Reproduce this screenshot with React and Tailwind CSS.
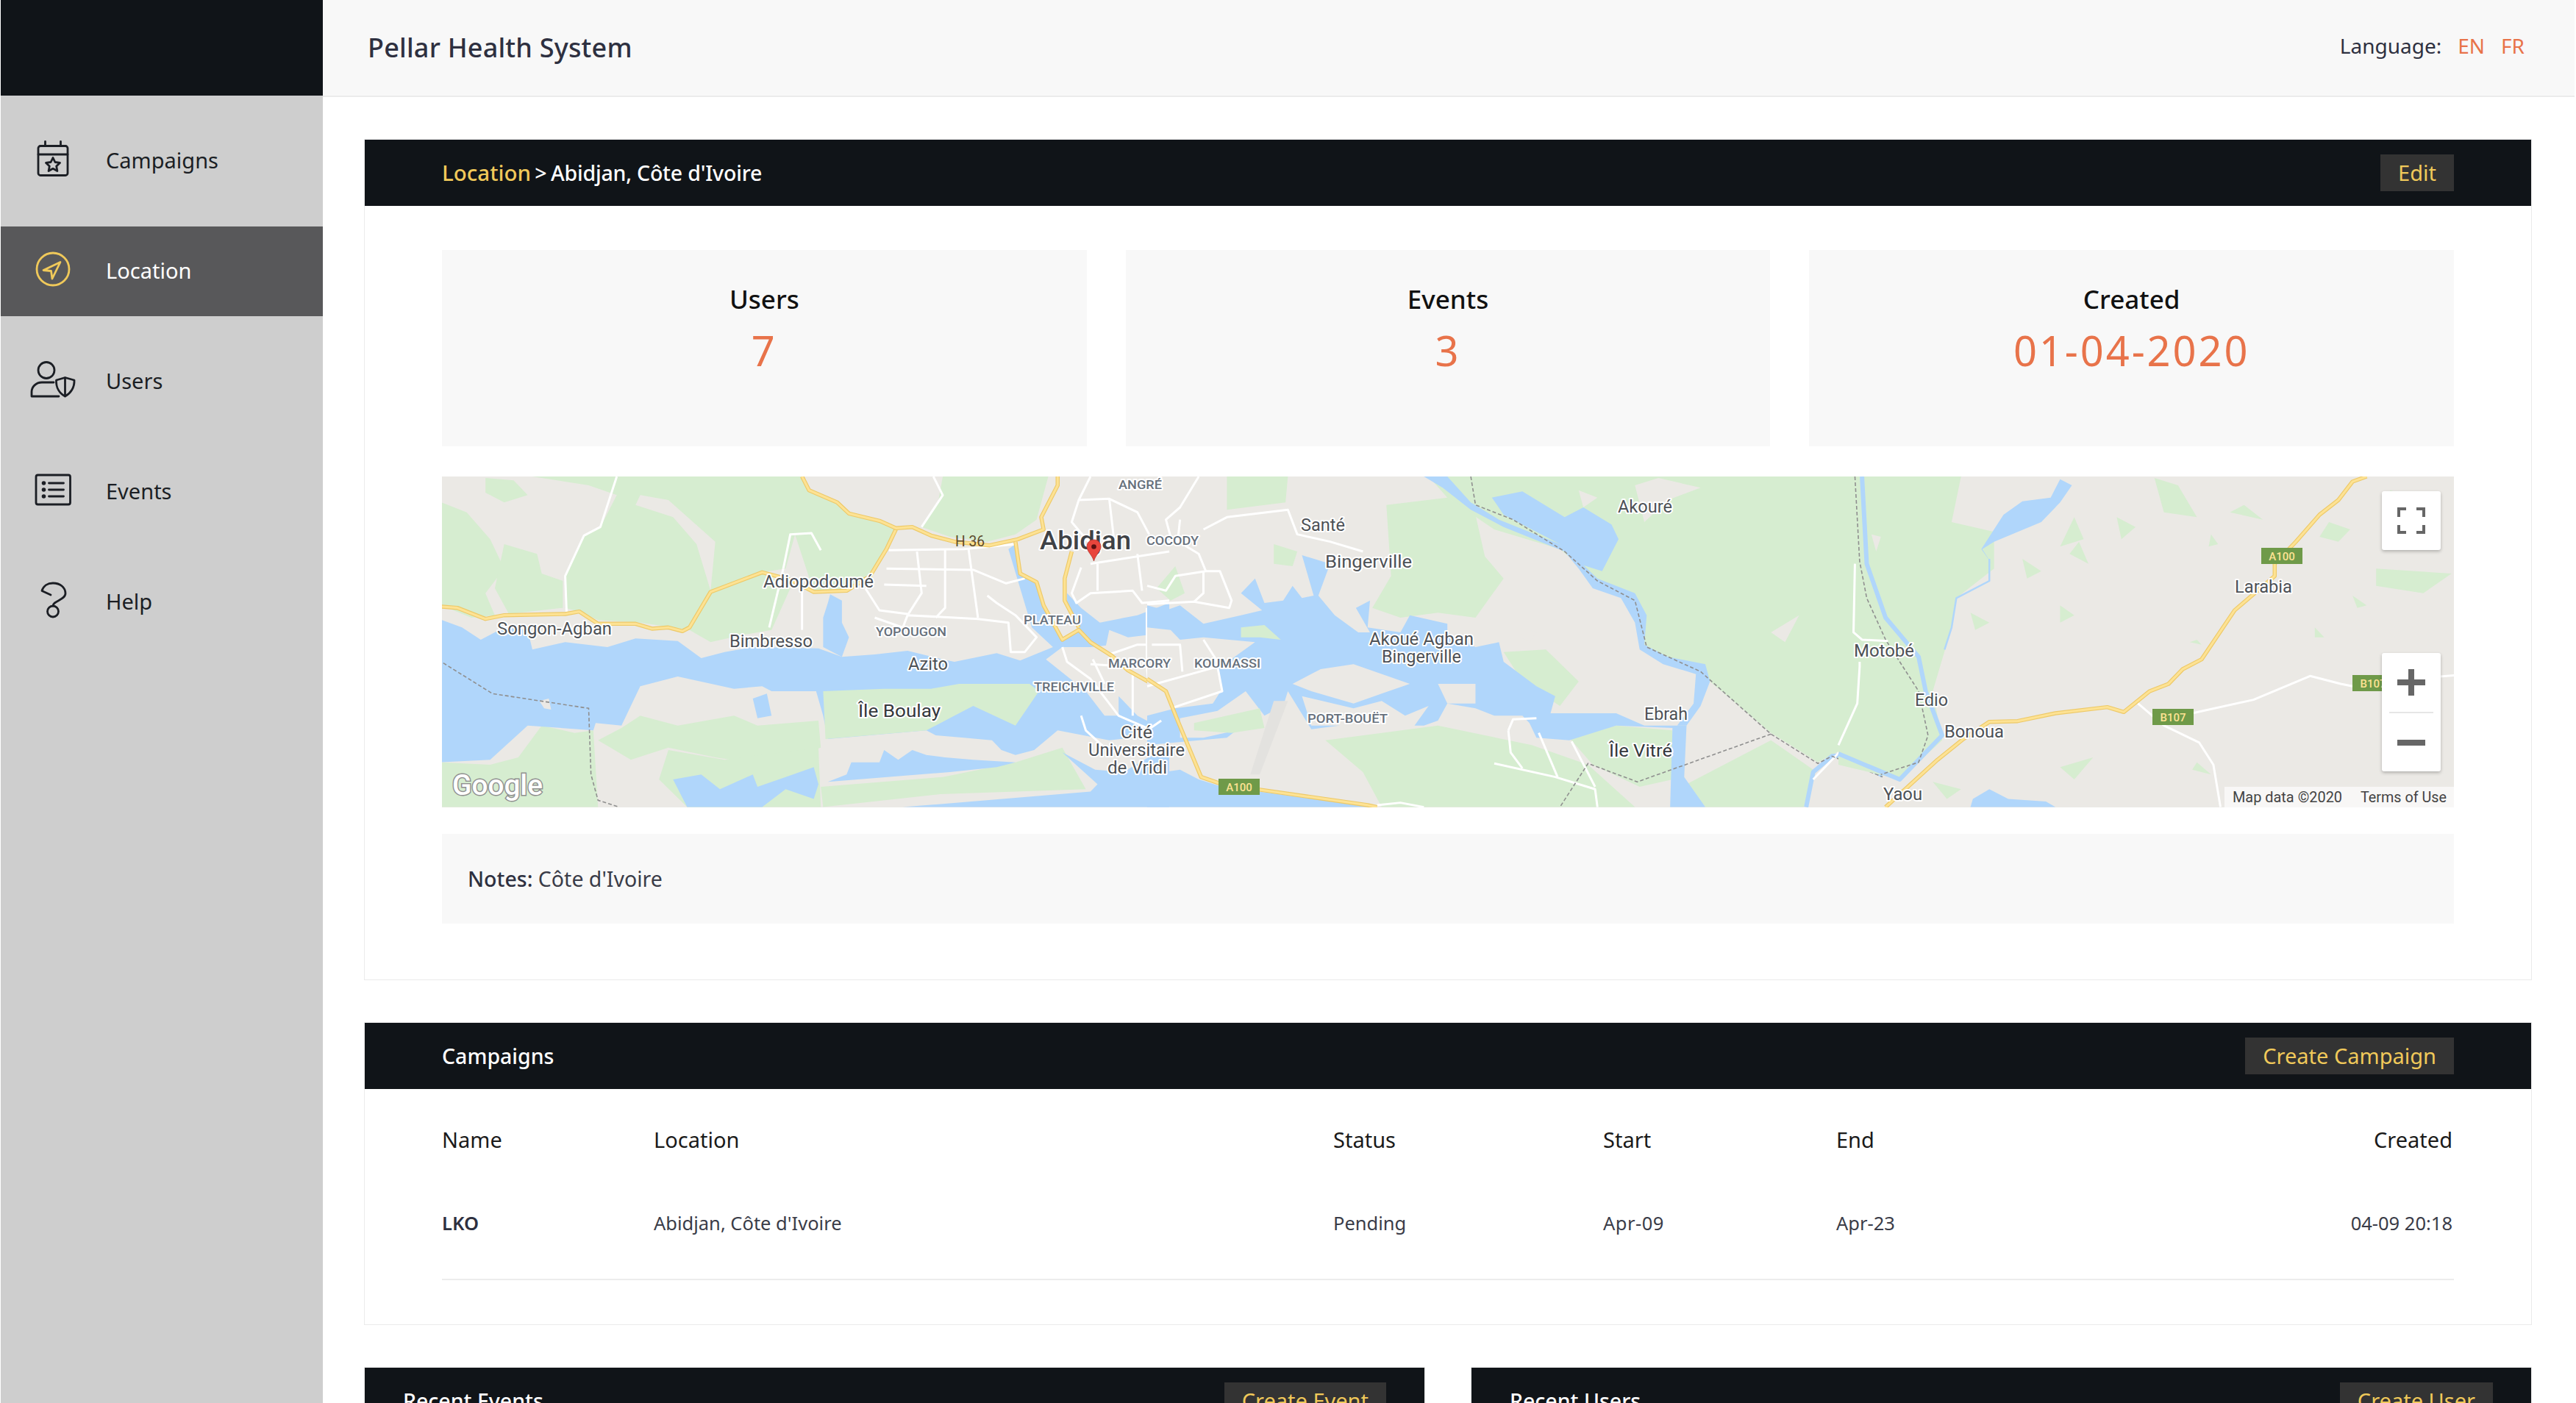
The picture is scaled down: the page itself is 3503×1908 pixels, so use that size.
import React from "react";

const INK = "#1b1e24";
const YEL = "#f0c95a";

function IconCampaigns() {
  return (
    <svg width="62" height="56" viewBox="40 188 62 56" fill="none" stroke={INK} strokeWidth="2.8" strokeLinecap="round" strokeLinejoin="round" className="-mt-[6px]">
      <rect x="51" y="198.5" width="40" height="40" rx="3" />
      <path d="M51 210H91M60.5 192.5V198.5M81.5 192.5V198.5" />
      <path d="M71 214.5l2.9 6 6.6.9-4.8 4.6 1.2 6.5-5.9-3.2-5.9 3.2 1.2-6.5-4.8-4.6 6.6-.9z" />
    </svg>
  );
}
function IconLocation() {
  return (
    <svg width="62" height="56" viewBox="40 338 62 56" fill="none" stroke={YEL} strokeWidth="2.8" strokeLinecap="round" strokeLinejoin="round" className="-mt-[6px]">
      <circle cx="71" cy="366" r="22" />
      <path d="M81 356.5L58 367.5L68.5 368.5L70 379Z" />
    </svg>
  );
}
function IconUsers() {
  return (
    <svg width="62" height="56" viewBox="40 488 62 56" fill="none" stroke={INK} strokeWidth="2.8" strokeLinecap="round" strokeLinejoin="round" className="-mt-[6px]">
      <circle cx="62" cy="503.5" r="11" />
      <path d="M72 520H56C48 520 42 526 42 533V539H79" />
      <path d="M87.5 513.5L100 517C100.500 527 95 535 87.500 539C80 535 75 527 75.500 517Z" />
      <path d="M87.500 514V538" />
    </svg>
  );
}
function IconEvents() {
  return (
    <svg width="62" height="56" viewBox="40 638 62 56" fill="none" stroke={INK} strokeWidth="2.8" strokeLinecap="round" strokeLinejoin="round" className="-mt-[6px]">
      <rect x="48" y="646" width="46.500" height="40" rx="2.500" />
      <path d="M65.500 657H85.500M65.500 666H85.500M65.500 675H85.500" />
      <circle cx="58.500" cy="657" r="1.400" fill={INK} />
      <circle cx="58.500" cy="666" r="1.400" fill={INK} />
      <circle cx="58.500" cy="675" r="1.400" fill={INK} />
    </svg>
  );
}
function IconHelp() {
  return (
    <svg width="62" height="56" viewBox="40 788 62 56" fill="none" stroke={INK} strokeWidth="2.8" strokeLinecap="round" strokeLinejoin="round" className="-mt-[6px]">
      <path d="M68 809L56 803.500C58 796.500 64 793 71 793C81 793 88 799 88 807C88 816 71 817 71 824" />
      <circle cx="71" cy="831.500" r="7.500" />
    </svg>
  );
}

const NAV = [
  ["Campaigns", IconCampaigns],
  ["Location", IconLocation, true],
  ["Users", IconUsers],
  ["Events", IconEvents],
  ["Help", IconHelp],
];

function Sidebar() {
  return (
    <aside className="flex w-[438px] shrink-0 flex-col bg-[#cecece]">
      <div className="h-[130px] bg-[#101418]" />
      <nav className="flex flex-col gap-[28px] pt-[28px]">
        {NAV.map(([label, Icon, active]) => (
          <div key={label} className={`flex h-[122px] items-center ${active ? "bg-[#58585a] text-white" : "text-[#1b1e24]"}`}>
            <div className="flex w-[143px] justify-center pr-[1px]"><Icon /></div>
            <span className="-mt-[2px] text-[29px]">{label}</span>
          </div>
        ))}
      </nav>
    </aside>
  );
}

function CardHeader({ children, action, px = "px-[105px]" }) {
  return (
    <div className={`flex h-[90px] items-center justify-between bg-[#101418] ${px}`}>
      <div className="text-[28.5px] font-medium text-white">{children}</div>
      {action && (
        <div className="flex h-[50px] items-center bg-[#333333] px-[24px] text-[29px] text-[#f0c95a]">{action}</div>
      )}
    </div>
  );
}

function Stat({ label, value }) {
  return (
    <div className="flex h-[267px] flex-col items-center bg-[#f8f8f8] pt-[42px]">
      <div className="h-[50px] text-[35px] font-medium leading-[50px] text-[#111]">{label}</div>
      <div className="mt-[8px] text-[56px] leading-[72px] tracking-[2.9px] text-[#e8734a]">{value}</div>
    </div>
  );
}

const Z5 = "translate(-11,-8) scale(0.6378,0.3333)";
const Z6 = "translate(959,-8) scale(0.6378,0.3333)";
const Z7 = "translate(1899,-8) scale(0.6414,0.3333)";

const GREEN = "#d6edd0";
const WATER = "#b0d6fb";
const LAND = "#ebe9e5";

function P({ pts, fill }) {
  return <polygon points={pts} fill={fill} />;
}
function Wh({ pts, w = 3 }) {
  return <polyline points={pts} fill="none" stroke="#ffffff" strokeWidth={w} strokeLinejoin="round" vectorEffect="non-scaling-stroke" />;
}
function Yw({ pts }) {
  return (
    <g fill="none" strokeLinejoin="round">
      <polyline points={pts} stroke="#edc968" strokeWidth="5.5" vectorEffect="non-scaling-stroke" />
      <polyline points={pts} stroke="#fde293" strokeWidth="3.2" vectorEffect="non-scaling-stroke" />
    </g>
  );
}
function Dash({ pts }) {
  return <polyline points={pts} fill="none" stroke="#8f8f8f" strokeWidth="1.6" strokeDasharray="5 3" vectorEffect="non-scaling-stroke" />;
}
function River({ pts, w = 6 }) {
  return <polyline points={pts} fill="none" stroke={WATER} strokeWidth={w} strokeLinejoin="round" vectorEffect="non-scaling-stroke" />;
}

function L({ x, y, w, t, s = 24, c = "#4d5156", b }) {
  return (
    <text x={x} y={y} fontSize={s} fill={c} fontWeight={b ? 500 : 400} textLength={w} lengthAdjust="spacingAndGlyphs" stroke="#ffffff" strokeWidth="4" strokeLinejoin="round" paintOrder="stroke">
      {t}
    </text>
  );
}
function Badge({ x, y, w = 56, t }) {
  return (
    <g>
      <rect x={x} y={y} width={w} height="22" fill="#6f9a49" />
      <text x={x + w / 2} y={y + 16.500} fontSize="15" fill="#fde293" textAnchor="middle" fontWeight="500">{t}</text>
    </g>
  );
}

function MapArt() {
  return (
    <svg viewBox="0 0 2738 450" width="2738" height="450" className="block font-['Roboto',sans-serif]">
      <rect width="2738" height="450" fill={LAND} />
      <g transform={Z5}>
        <P fill={GREEN} pts="210,24 785,24 800,80 860,130 885,175 950,205 985,235 960,320 930,430 880,490 810,495 770,260 750,400 700,415 590,495 545,650 440,620 350,610 310,575 280,560 280,430 320,265 355,230 390,100 330,60" />
        <P fill={LAND} pts="440,100 500,120 600,290 590,490 560,300 510,190 430,140" />
        <P fill={GREEN} pts="1085,24 1310,24 1285,200 1240,260 1180,290 1100,270 1040,230 1075,130" />
        <P fill={GREEN} pts="17,130 70,170 120,280 150,400 110,500 130,590 80,600 17,550" />
        <P fill={GREEN} pts="150,300 220,340 230,420 275,450 275,560 160,585 130,480" />
        <P fill={GREEN} pts="110,30 170,40 200,100 150,130 110,90" />
        <P fill={GREEN} pts="590,495 700,415 760,480 720,650 660,670 590,700 545,650" />
        <P fill={GREEN} pts="17,1190 120,1200 180,1170 230,1040 300,1070 340,1060 350,1373 17,1373" />
        <P fill={GREEN} pts="400,1050 440,1000 520,1040 640,1000 690,1040 820,1020 825,1130 700,1200 600,1170 500,1130 420,1180 350,1100" />
        <P fill={GREEN} pts="500,1140 620,1180 820,1130 825,1373 540,1373 480,1260" />
        <P fill={GREEN} pts="825,1290 1085,1250 1240,1190 1340,1130 1390,1300 1080,1320 830,1373" />

        <P fill={WATER} pts="17,610 60,640 100,690 150,640 200,650 210,730 280,700 370,720 430,685 520,695 570,765 620,740 680,720 820,725 870,760 940,750 1010,735 1085,770 1110,780 1200,745 1250,775 1320,720 1275,640 1225,320 1240,300 1250,430 1290,460 1300,560 1340,690 1375,650 1350,560 1350,500 1380,560 1420,620 1500,590 1568,540 1568,660 1480,680 1440,650 1430,740 1400,720 1340,720 1305,770 1390,900 1430,1000 1490,1000 1530,1040 1568,1050 1568,1100 1490,1090 1440,1100 1330,1060 1280,1140 1240,1160 1210,1140 1190,1100 1130,1090 1070,1080 1050,1060 840,1095 830,1000 815,900 720,900 700,880 640,890 520,840 440,880 400,1040 345,1030 340,1060 200,1040 120,1180 17,1190" />
        <P fill={GREEN} pts="830,900 960,890 1060,890 1120,870 1270,870 1290,900 1240,1040 1150,960 1110,1000 1050,1060 835,1095" />
        <P fill={WATER} pts="845,505 870,530 870,620 885,680 870,760 830,720 830,600 840,540" />
        <P fill={WATER} pts="840,1270 1100,1230 1200,1210 1240,1190 1150,1180 1090,1170 1050,1160 1020,1140 990,1180 960,1140 950,1190 890,1190 880,1240" />
        <P fill={WATER} pts="510,1260 570,1240 610,1300 680,1240 690,1290 750,1250 810,1210 820,1280 810,1340 750,1300 700,1373 540,1373" />
        <P fill={WATER} pts="680,930 710,910 720,1000 690,1010" />
        <P fill={LAND} pts="225,940 245,930 250,975 235,970" />
        <P fill={WATER} pts="1000,1373 1400,1310 1415,1280 1340,1150 1410,1220 1470,1230 1568,1120 1568,1373" />
        <P fill={LAND} pts="1350,730 1400,720 1500,700 1568,700 1568,1040 1530,1030 1490,990 1440,900 1380,800" />
        <P fill={WATER} pts="1460,920 1500,1000 1540,1040 1568,1050 1568,1090 1460,1080" />

        <Wh pts="390,24 355,230 320,265 280,430 283,580" />
        <Wh pts="745,400 760,260 805,255 825,325" />
        <Wh pts="745,400 715,640" />
        <Wh pts="785,480 785,650" />
        <Wh pts="970,325 1130,320 1240,300" />
        <Wh pts="965,400 1150,405 1220,460 1260,440" />
        <Wh pts="960,465 1050,470" />
        <Wh pts="1030,330 1040,500 1010,590" />
        <Wh pts="1090,320 1090,560 1070,600" />
        <Wh pts="1140,320 1160,600" />
        <Wh pts="920,480 950,570 1010,585" />
        <Wh pts="940,600 1000,640 1010,590 1160,605 1225,620 1230,740 1260,740 1285,680 1240,590 1200,540 1180,510" />
        <Wh pts="1065,24 1085,100 1040,230" />
        <Wh pts="1375,120 1440,115 1500,170 1525,260" />
        <Wh pts="1400,24 1375,120 1360,210 1400,300" />
        <Wh pts="1440,115 1450,280" />
        <Wh pts="1400,380 1568,330" />
        <Wh pts="1380,395 1360,500 1370,540 1400,500 1490,490 1510,540 1568,530" />
        <Wh pts="1415,380 1415,490" />
        <Wh pts="1500,340 1510,490" />
        <Wh pts="1520,560 1520,800 1530,980" />
        <Wh pts="1340,720 1350,780 1400,850 1460,1000 1520,1050" />
        <Wh pts="1405,770 1430,870" />
        <Wh pts="1440,750 1500,710 1568,710" />
        <Wh pts="1400,790 1480,800" />
        <Wh pts="1490,830 1490,1000" />
        <Wh pts="1380,1000 1390,1060 1430,1130" />

        <Yw pts="17,555 50,560 110,605 150,590 280,585 310,575 350,625 430,625 465,645 500,640 530,655 545,640 590,495 700,415 760,445 810,495 880,490 930,430 965,320 985,240" />
        <Yw pts="785,24 800,80 860,130 885,175 950,205 985,235 1020,230 1060,265 1110,290 1185,305 1245,280 1300,240 1295,190 1330,60 1330,24" />
        <Yw pts="1240,290 1250,420 1285,455 1300,550 1340,690 1375,650 1400,700 1445,755 1480,815 1550,890 1568,1000" />
        <Yw pts="1360,330 1345,440 1345,530 1375,640" />
        <Dash pts="20,785 125,910 330,970 335,1240 350,1345 395,1373" />
      </g>
      <g transform={Z6}>
        <P fill={GREEN} pts="170,24 300,24 295,130 170,160" />
        <P fill={GREEN} pts="600,24 1510,24 1510,380 1505,660 1520,800 1500,1120 1430,1190 1330,1070 1200,860 1060,720 1040,510 960,450 880,320 740,240 640,110" />
        <P fill={GREEN} pts="510,140 640,110 700,180 720,350 760,440 700,600 620,580 540,600 480,560 520,430" />
        <P fill={LAND} pts="1040,60 1090,30 1180,70 1110,120 1060,210" />
        <P fill={LAND} pts="1330,660 1390,590 1360,700" />
        <P fill={LAND} pts="920,80 960,110 930,150" />
        <P fill={LAND} pts="800,640 830,660 815,700 795,680" />
        <P fill={GREEN} pts="270,300 320,330 310,390 270,380" />
        <P fill={GREEN} pts="20,480 60,390 80,500 50,530" />
        <P fill={GREEN} pts="380,1100 620,1040 720,1080 820,1120 940,1200 1040,1373 500,1373 460,1230" />
        <P fill={GREEN} pts="900,1090 1000,1040 1120,1060 1120,1260 1050,1290 950,1200" />
        <P fill={GREEN} pts="1150,1280 1330,1100 1420,1220 1400,1373 1190,1373" />
        <P fill={GREEN} pts="760,740 850,730 920,860 880,960 800,860" />

        <P fill={WATER} pts="0,550 40,570 70,550 120,625 200,590 245,570 200,500 230,440 250,540 290,530 310,470 330,520 355,510 330,345 390,380 365,510 400,590 450,660 475,660 445,560 475,530 470,640 540,660 560,590 640,625 640,660 700,720 750,700 760,780 830,880 870,920 860,990 1000,990 1060,1040 1150,1040 1145,1250 1190,1373 1115,1373 1120,1050 1000,1040 900,1100 830,1090 815,1030 800,1000 740,1000 700,970 640,950 620,1020 590,1040 570,1040 600,960 550,1000 500,940 440,970 330,920 350,1040 410,1040 350,1055 300,900 290,960 250,1000 210,900 150,980 70,1010 70,1090 120,1090 190,1060 170,1090 0,1120" />
        <P fill={LAND} pts="0,640 50,650 70,690 120,680 230,700 150,810 160,890 140,950 60,970 0,1000" />
        <P fill={GREEN} pts="200,640 250,630 285,690 240,680 200,680" />
        <P fill={LAND} pts="310,870 370,810 440,790 560,870 500,910 440,950 350,900" />
        <P fill={LAND} pts="620,870 700,870 700,950 640,950" />
        <P fill={GREEN} pts="100,1030 240,970 250,1050 180,1070 100,1060" />
        <P fill="#e3e2df" pts="220,1240 270,940 300,940 240,1240" />
        <P fill={WATER} pts="0,1240 70,1220 110,1260 160,1290 490,1373 0,1373" />
        <P fill={WATER} pts="590,24 640,24 690,130 750,200 880,300 900,330 960,440 1040,500 1065,590 1060,710 1110,760 1190,790 1200,860 1180,960 1150,1040 1130,1040 1165,950 1170,830 1100,790 1050,730 1040,620 1010,520 950,480 920,400 890,330 760,230 690,160 630,70" />
        <P fill={WATER} pts="735,110 800,85 890,190 930,150 990,220 1005,280 970,410 920,380 880,300 760,180" />
        <River pts="1405,1373 1420,1230 1460,1165 1490,1160 1568,1245" />
        <River pts="1530,24 1545,200 1540,380 1568,600" w={4} />

        <Wh pts="110,24 70,150 40,200 50,270 110,340 125,410 60,430 40,490 0,470" />
        <Wh pts="120,240 170,190 300,160 320,260 390,290 460,330" />
        <Wh pts="0,290 65,290 70,200" />
        <Wh pts="125,410 155,410 180,530 175,560 100,535 0,545" />
        <Wh pts="120,410 120,500 100,535" />
        <Wh pts="10,710 70,710 75,820" />
        <Wh pts="0,880 150,800 160,900 50,970" />
        <Wh pts="120,690 150,780" />
        <Wh pts="30,1020 0,1060" />
        <Wh pts="490,1365 540,1355 590,1373" />
        <Wh pts="770,1060 780,1015 830,1010" />
        <Wh pts="770,1060 775,1150 800,1215" />
        <Wh pts="740,1195 870,1250 955,1300 960,1373" />
        <Wh pts="835,1070 875,1250" />
        <Wh pts="905,1105 955,1290" />
        <Wh pts="1510,380 1505,660 1568,700" />
        <Wh pts="1520,800 1520,930 1480,1140 1420,1260" />
        <Yw pts="0,850 40,900 65,1020 115,1250 160,1280 470,1365 490,1373" />
        <Dash pts="690,24 700,140 780,200 890,330 960,450 1040,530 1065,720 1180,820 1330,1075 1430,1195 1460,1165 1568,1250" />
        <Dash pts="1330,1075 1045,1270 940,1195 880,1373" />
        <Dash pts="1505,24 1520,380 1568,650" />
      </g>
      <g transform={Z7}>
        <P fill={GREEN} pts="0,24 260,24 240,210 330,250 330,400 250,520 240,640 200,900 220,1100 130,1260 0,1200" />
        <P fill={LAND} pts="70,260 90,270 80,330" />
        <P fill={WATER} pts="470,35 495,60 470,130 430,210 330,290 305,320 325,380 303,320 350,180 390,125 450,110" />
        <P fill={WATER} pts="280,1373 285,1340 320,1300 360,1340 440,1350 460,1373" />
        <River pts="50,24 60,380 100,600 170,760 185,900 220,1080 130,1260 80,1220 0,1155" />
        <River pts="320,360 320,450 250,520 240,640 225,730" w={2.500} />
        {[
          "590,190 630,230 600,280","500,190 520,280 470,310","470,550 500,590 470,620","670,30 720,60 760,190 690,170","860,140 900,200 830,170","1040,210 1085,240 1060,290 1020,270","1170,80 1250,130 1230,240 1160,220","1140,400 1300,420 1240,500 1140,470","1090,510 1120,550 1100,560","760,690 770,710 745,700","540,1170 500,1260 470,1210","760,1190 790,1240 750,1220","200,1270 260,1300 230,1340","1010,640 1030,680 1010,680","390,360 430,410 400,440","280,580 320,620 290,650","790,260 805,300 785,310","510,290 530,380 490,340",
        ].map((p) => <P key={p} fill={GREEN} pts={p} />)}
        <Dash pts="35,24 45,370 60,520 100,690 170,900 190,1080 170,1190 90,1240" />
        <Wh pts="35,380 32,660 50,690 105,695" />
        <Wh pts="45,780 45,800 40,950 0,1120" />
        <Wh pts="635,950 690,1040 765,1110 795,1200 810,1373" />
        <Wh pts="750,990 880,935 1000,838 1065,870 1090,880" />
        <Wh pts="1150,860 1308,835" />
        <Yw pts="1120,24 1090,45 1060,120 1020,180 970,290 925,380 925,430 840,570 770,770 730,810 700,870 660,900 605,985 570,965 460,990 380,1022 320,1025 265,1095 210,1180 100,1373" />
      </g>

      <L x={75} y={215} w={156} t="Songon-Agban" />
      <L x={437} y={151} w={150} t="Adiopodoumé" />
      <L x={391} y={232} w={113} t="Bimbresso" />
      <text x={698} y={95} fontSize="20" fill="#5c4a2a" textLength="40" lengthAdjust="spacingAndGlyphs">H 36</text>
      <L x={813} y={99} w={124} s={35} c="#3f4246" t="Abidjan" b />
      <L x={920} y={17} w={59} s={17} c="#66707c" t="ANGRÉ" b />
      <L x={958} y={93} w={71} s={17} c="#66707c" t="COCODY" b />
      <L x={590} y={217} w={96} s={17} c="#66707c" t="YOPOUGON" b />
      <L x={791} y={201} w={78} s={17} c="#66707c" t="PLATEAU" b />
      <L x={634} y={263} w={54} t="Azito" />
      <L x={906} y={260} w={85} s={17} c="#66707c" t="MARCORY" b />
      <L x={805} y={292} w={109} s={17} c="#66707c" t="TREICHVILLE" b />
      <L x={1023} y={260} w={90} s={17} c="#66707c" t="KOUMASSI" b />
      <L x={566} y={327} w={112} c="#35383c" t="Île Boulay" />
      <L x={923} y={356} w={43} t="Cité" />
      <L x={879} y={380} w={131} t="Universitaire" />
      <L x={905} y={404} w={81} t="de Vridi" />
      <L x={1168} y={74} w={60} t="Santé" />
      <L x={1201} y={124} w={118} t="Bingerville" />
      <L x={1599} y={49} w={74} t="Akouré" />
      <L x={1261} y={229} w={142} t="Akoué Agban" />
      <L x={1278} y={253} w={108} t="Bingerville" />
      <L x={1177} y={335} w={109} s={17} c="#66707c" t="PORT-BOUËT" b />
      <L x={1635} y={331} w={59} t="Ebrah" />
      <L x={1587} y={381} w={86} c="#35383c" t="Île Vitré" />
      <L x={1920} y={245} w={82} t="Motobé" />
      <L x={2003} y={312} w={45} t="Edio" />
      <L x={2043} y={355} w={81} t="Bonoua" />
      <L x={1960} y={440} w={53} t="Yaou" />
      <L x={2438} y={158} w={78} t="Larabia" />
      <Badge x={1056} y={411} t="A100" />
      <Badge x={2474} y={97} t="A100" />
      <Badge x={2326} y={316} t="B107" />
      <Badge x={2598} y={270} t="B107" />

      <text x={14} y={433} fontSize="39" fill="#ffffff" fontWeight="500" textLength="123" lengthAdjust="spacingAndGlyphs" stroke="#8f8f8f" strokeWidth="3" paintOrder="stroke">Google</text>

      <path d="M886.500 86C881 86 877 90 877 95.500C877 102 884.500 107 886.500 115C888.500 107 896 102 896 95.500C896 90 892 86 886.500 86Z" fill="#e8453c" stroke="#b3362e" strokeWidth="0.800" />
      <circle cx="886.500" cy="95.500" r="3.300" fill="#5a1010" />

      <rect x="2424" y="422" width="314" height="28" fill="#ffffff" fillOpacity="0.65" />
      <text x="2435" y="443" fontSize="20" fill="#444" textLength="149" lengthAdjust="spacingAndGlyphs">Map data ©2020</text>
      <text x="2609" y="443" fontSize="20" fill="#444" textLength="117" lengthAdjust="spacingAndGlyphs">Terms of Use</text>
    </svg>
  );
}

function GoogleMap() {
  return (
    <div className="relative mt-[41px] h-[450px] overflow-hidden">
      <MapArt />
      <div className="absolute left-[2638px] top-[20px] flex h-[80px] w-[80px] items-center justify-center rounded-[3px] bg-white shadow-[0_2px_4px_rgba(0,0,0,0.25)]">
        <svg width="38" height="36" viewBox="0 0 38 36" fill="none" stroke="#666" strokeWidth="4">
          <path d="M2 13V2H12M26 2H36V13M36 24V34H26M12 34H2V24" />
        </svg>
      </div>
      <div className="absolute left-[2638px] top-[240px] flex h-[161px] w-[80px] flex-col items-center rounded-[3px] bg-white shadow-[0_2px_4px_rgba(0,0,0,0.25)]">
        <div className="flex h-[80px] items-center justify-center">
          <svg width="38" height="36" viewBox="0 0 38 36" fill="#666"><path d="M15 0H23V14H38V22H23V36H15V22H0V14H15Z" /></svg>
        </div>
        <div className="h-[2px] w-[60px] bg-[#e6e6e6]" />
        <div className="flex h-[79px] items-center justify-center">
          <svg width="38" height="8" viewBox="0 0 38 8" fill="#666"><rect width="38" height="8" /></svg>
        </div>
      </div>
    </div>
  );
}

function Panel({ children, className = "" }) {
  return <section className={`border border-[#ebebeb] bg-white ${className}`}>{children}</section>;
}

const COLS = "grid grid-cols-[288px_924px_367px_317px_1fr_auto] items-center";

export default function App() {
  return (
    <div className="flex h-[1908px] w-full overflow-hidden bg-white pl-px pr-[2px] font-['Noto_Sans',sans-serif]">
      <Sidebar />
      <main className="min-w-0 flex-1">
        <header className="flex h-[132px] items-center justify-between border-b-2 border-[#ececec] bg-[#f8f8f8] pl-[61px] pr-[68px]">
          <h1 className="text-[36px] font-medium tracking-[0.2px] text-[#2e3040]">Pellar Health System</h1>
          <div className="-mt-[6px] flex text-[28px] text-[#2e3040]">
            <span>Language:</span>
            <span className="ml-[22px] text-[#e8734a]">EN</span>
            <span className="ml-[22px] text-[#e8734a]">FR</span>
          </div>
        </header>

        <div className="pl-[56px] pr-[58px] pt-[57px]">
          <Panel>
            <CardHeader action="Edit">
              <span className="text-[29.5px] text-[#f0c95a]">Location</span>
              <span className="[word-spacing:-2px]"> &gt; </span>
              <span className="tracking-[-0.2px]">Abidjan, Côte d'Ivoire</span>
            </CardHeader>
            <div className="px-[105px] pb-[76px] pt-[60px]">
              <div className="grid grid-cols-3 gap-[53px]">
                <Stat label="Users" value="7" />
                <Stat label="Events" value="3" />
                <Stat label="Created" value="01-04-2020" />
              </div>
              <GoogleMap />
              <div className="mt-[36px] flex h-[122px] items-center bg-[#f8f8f8] px-[35px] text-[28.5px] text-[#3a3c48]">
                <span className="font-medium text-[#2e3040]">Notes:</span>&nbsp;Côte d'Ivoire
              </div>
            </div>
          </Panel>

          <Panel className="mt-[57px]">
            <CardHeader action="Create Campaign">Campaigns</CardHeader>
            <div className="px-[105px] pb-[60px] pt-[39px]">
              <div className={`${COLS} h-[60px] text-[29px] text-[#1a1a1a]`}>
                <span>Name</span><span>Location</span><span>Status</span><span>Start</span><span>End</span><span className="pr-[2px] text-right">Created</span>
              </div>
              <div className={`${COLS} border-b-2 border-[#ececec] pb-[46px] pt-[53px] text-[25.5px] leading-[60px] text-[#3a3c48]`}>
                <span className="font-semibold text-[#2e3040]">LKO</span><span>Abidjan, Côte d'Ivoire</span><span>Pending</span><span className="tracking-[0.5px]">Apr-09</span><span>Apr-23</span><span className="pr-[2px] text-right">04-09 20:18</span>
              </div>
            </div>
          </Panel>

          <div className="mt-[57px] grid grid-cols-[1443px_1443px] justify-between">
            <Panel>
              <CardHeader action="Create Event" px="px-[52px]">Recent Events</CardHeader>
            </Panel>
            <Panel>
              <CardHeader action="Create User" px="px-[52px]">Recent Users</CardHeader>
            </Panel>
          </div>
        </div>
      </main>
    </div>
  );
}
